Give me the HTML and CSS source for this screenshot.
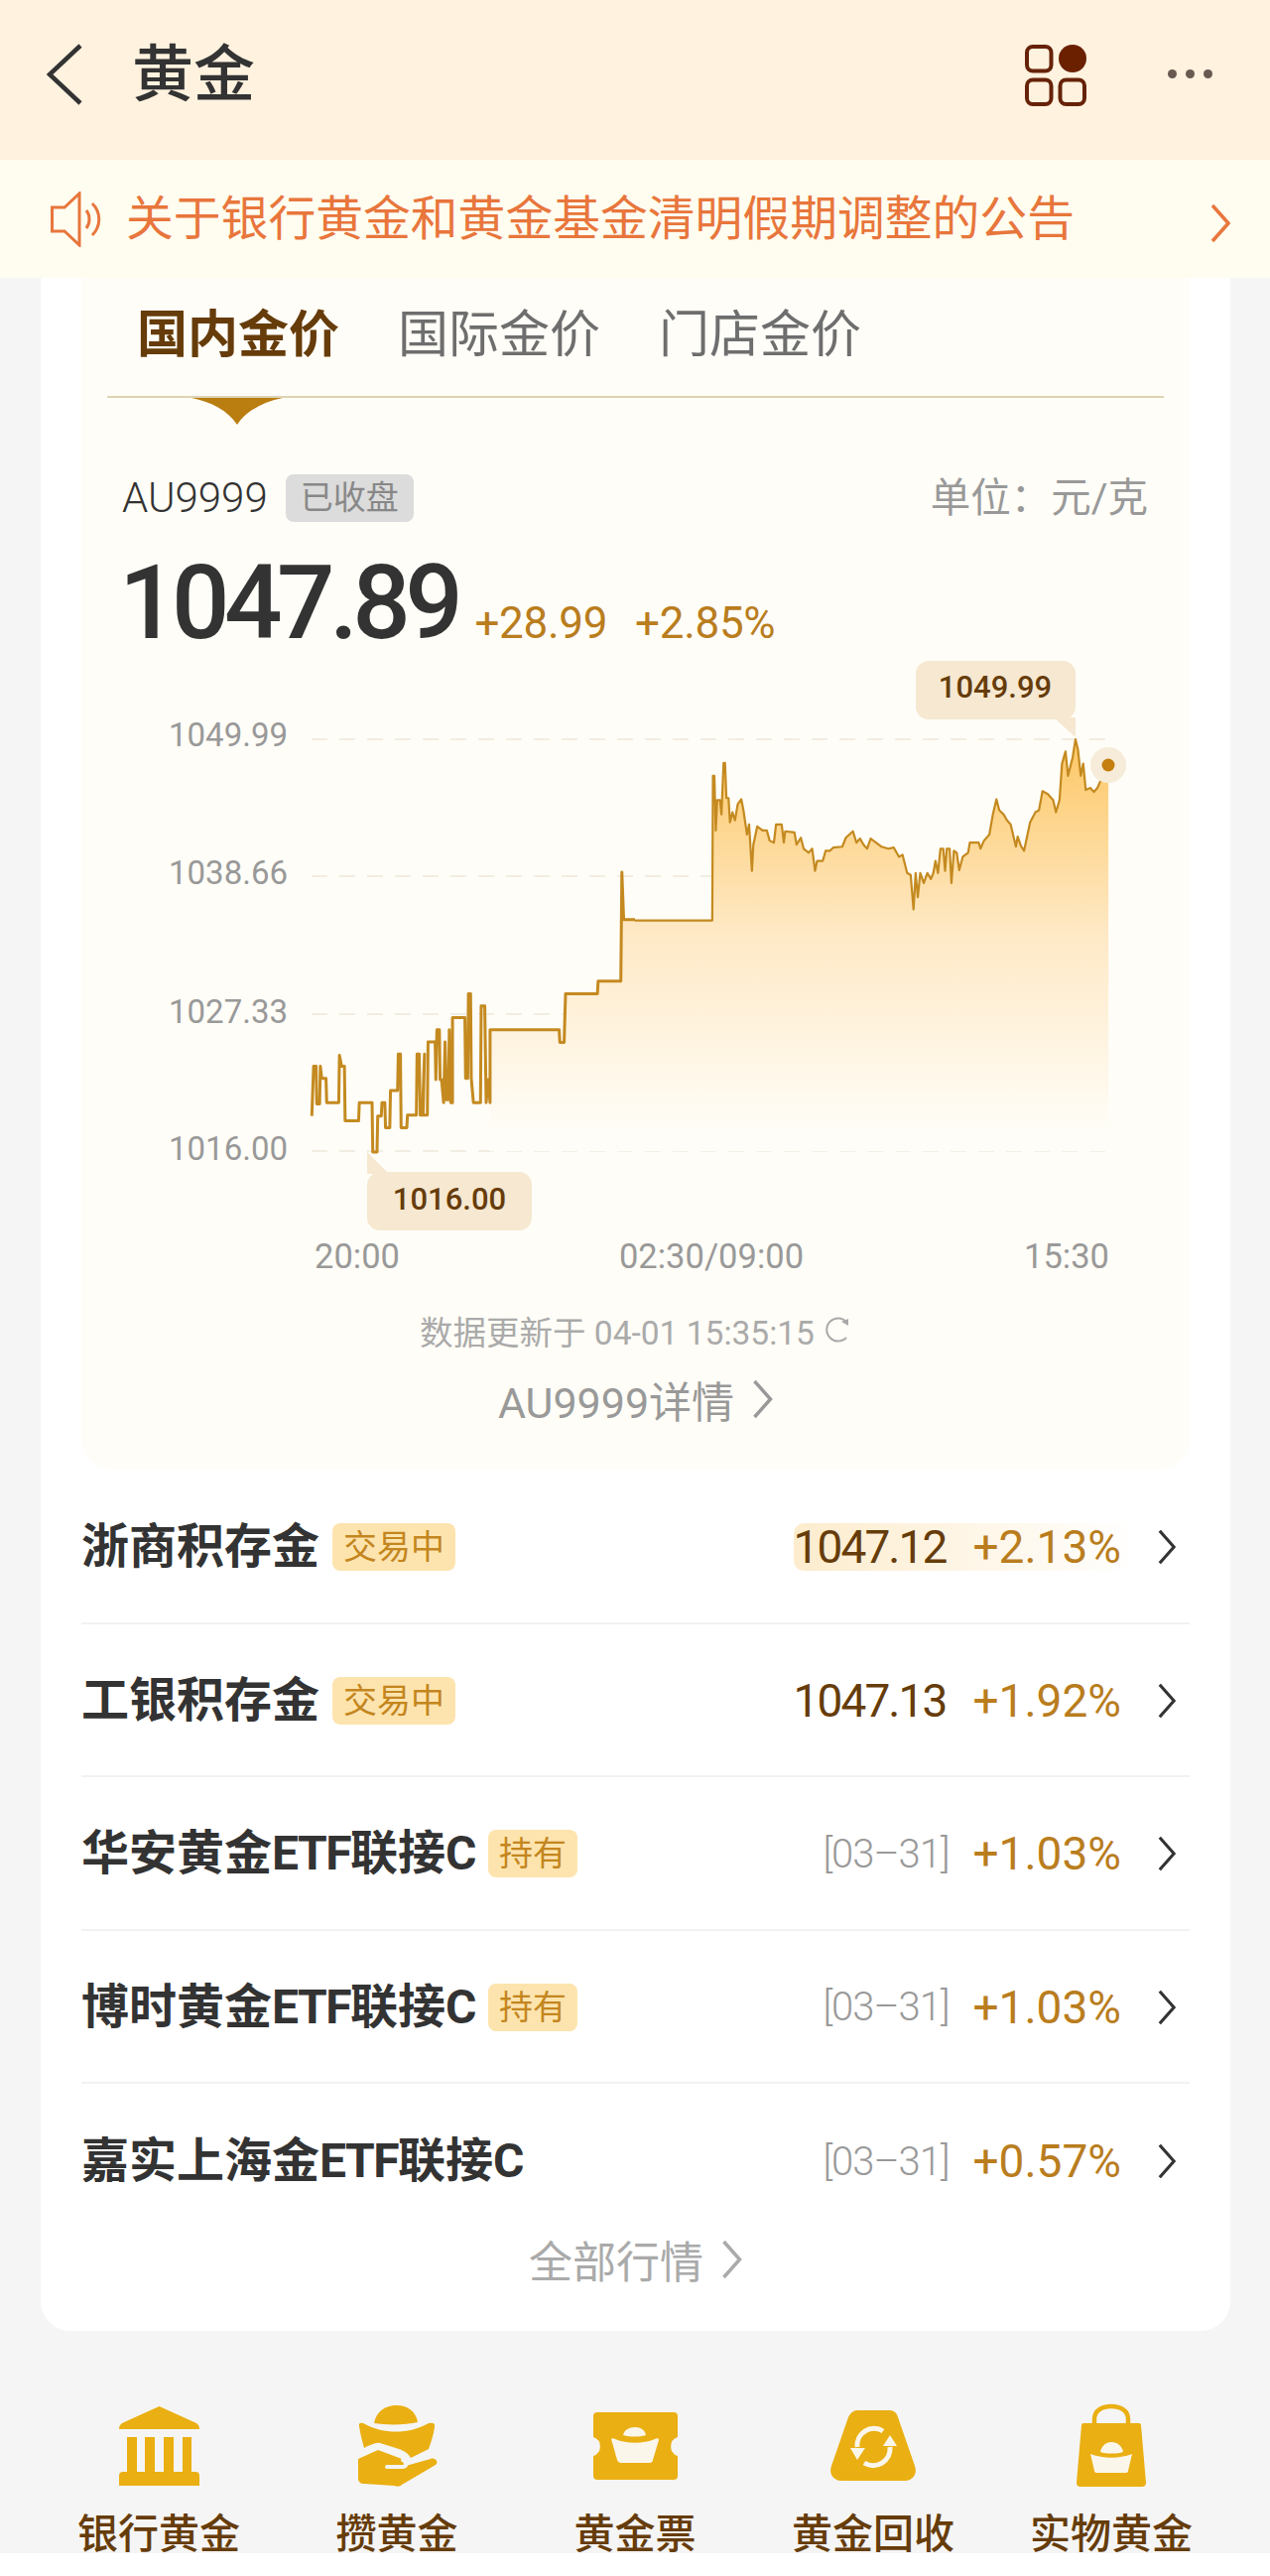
FILE: index.html
```html
<!DOCTYPE html>
<html lang="zh-CN">
<head>
    <meta charset="UTF-8">
    <meta name="viewport" content="width=device-width, initial-scale=1.0">
    <title>黄金</title>
    <link rel="stylesheet" href="styles.css">
</head>

<body>
    <svg class="sprite" width="0" height="0">
        <symbol id="chev" viewBox="0 0 20 40">
            <polyline points="2,2 18,20 2,38" fill="none" stroke="currentColor" stroke-width="3.5"/>
        </symbol>
    </svg>

    <div class="app">
        <!-- Top bar -->
        <header class="topbar">
            <svg class="back" viewBox="0 0 36 62"><polyline points="34,2 3,31 34,60" fill="none" stroke="#333" stroke-width="4.5"/></svg>
            <h1 class="title">黄金</h1>
            <svg class="grid-icon" viewBox="0 0 62 62">
                <rect x="2" y="2" width="24.500" height="24.500" rx="6" fill="none" stroke="#662208" stroke-width="4"/>
                <circle cx="48" cy="14" r="14" fill="#6b2000"/>
                <rect x="2" y="35.500" width="24.500" height="24.500" rx="6" fill="none" stroke="#662208" stroke-width="4"/>
                <rect x="35.500" y="35.500" width="24.500" height="24.500" rx="6" fill="none" stroke="#662208" stroke-width="4"/>
            </svg>
            <div class="more"><i></i><i></i><i></i></div>
        </header>

        <!-- Notice -->
        <div class="notice">
            <svg class="speaker" viewBox="0 0 54 56">
                <path d="M1.500 16 H14 L29 2 V54 L14 40 H1.500 Z" fill="none" stroke="#e8763c" stroke-width="3"/>
                <path d="M36 19 C40 24 40 32 36 37 M42 12 C51 21 51 35 42 44" fill="none" stroke="#e8763c" stroke-width="3"/>
            </svg>
            <span class="notice-text">关于银行黄金和黄金基金清明假期调整的公告</span>
            <svg class="notice-chev"><use href="#chev"/></svg>
        </div>

        <main class="card">
            <section class="panel">
                <nav class="tabs">
                    <span class="tab active">国内金价</span>
                    <span class="tab">国际金价</span>
                    <span class="tab">门店金价</span>
                    <svg class="tab-arrow" viewBox="0 0 92 27"><path d="M0 0 H92 C72 4 55 13 46 27 C37 13 20 4 0 0 Z" fill="#b97d10"/></svg>
                </nav>

                <div class="quote-head">
                    <div class="quote-name">
                        <span class="symbol">AU9999</span>
                        <span class="closed">已收盘</span>
                    </div>
                    <span class="unit">单位：元/克</span>
                </div>

                <div class="price-line">
                    <span class="price">1047.89</span>
                    <span class="change">+28.99</span>
                    <span class="change">+2.85%</span>
                </div>

                <!-- Chart, drawn in page coordinates -->
                <svg class="chart" viewBox="82 660 1116 630">
                    <defs>
                        <linearGradient id="area" gradientUnits="userSpaceOnUse" x1="0" y1="254" x2="0" y2="1220">
                            <stop offset="0" stop-color="#fdc765"/>
                            <stop offset="0.5" stop-color="#fee9c6"/>
                            <stop offset="1" stop-color="#fffdf7"/>
                        </linearGradient>
                    </defs>

                    <line class="grid" x1="314" y1="744" x2="1117" y2="744"/>
                    <line class="grid" x1="314" y1="882" x2="1117" y2="882"/>
                    <line class="grid" x1="314" y1="1021" x2="1117" y2="1021"/>
                    <line class="grid" x1="314" y1="1159" x2="1117" y2="1159"/>

                    <text class="axis" x="290" y="751" text-anchor="end">1049.99</text>
                    <text class="axis" x="290" y="890" text-anchor="end">1038.66</text>
                    <text class="axis" x="290" y="1030" text-anchor="end">1027.33</text>
                    <text class="axis" x="290" y="1168" text-anchor="end">1016.00</text>

                    <!-- night session -->
                    <g transform="translate(100 640) scale(.35714 .40816)">
                        <path class="area" d="M1103 972 H1298 L1300 1003 H1312 L1316 883 H1406 L1408 852 H1472 L1475 583 L1480 700 H1512 V1272 H1103 Z"/>
                        <path class="line" d="M600 1185 L605 1062 H612 L614 1155 H622 L624 1062 L628 1092 H640 L642 1152 H676 L678 1035 L684 1062 H692 L694 1197 H732 L734 1152 H770 L772 1274 H784 L786 1185 H796 L798 1152 H806 L808 1214 H820 L822 1122 H842 L844 1032 H850 L852 1214 H868 L870 1183 H895 L897 1032 H903 L906 1183 H912 L918 1032 L914 1183 H926 L928 1002 H948 L950 1095 L953 972 H960 L962 1095 H966 L972 1152 L976 1002 L980 1145 H985 L988 972 L992 1152 H997 V942 H1032 L1034 1092 H1040 L1042 883 H1048 L1050 1092 L1056 1152 H1076 L1078 913 H1088 L1092 1152 L1098 1095 L1103 1152 V972 H1298 L1300 1003 H1312 L1316 883 H1406 L1408 852 H1472 L1475 583 L1480 700 H1512"/>
                    </g>
                    <!-- day session -->
                    <g transform="translate(640 640) scale(.35714 .40816)">
                        <path class="area" d="M0 702 H218 L220 345 H224 L228 480 L232 405 H240 L244 440 L250 313 H254 L258 400 H264 L268 460 L275 435 L282 455 L290 415 L300 403 L306 430 L316 490 L322 465 L330 580 L334 515 L345 470 L360 480 H372 L380 505 L392 510 L398 465 H414 L420 510 L424 482 L450 485 L456 515 L468 498 L476 525 L490 535 L500 525 L508 580 L514 555 H530 L538 530 H550 L560 522 L585 520 L595 498 L615 482 L625 510 L635 500 L645 515 L655 525 L665 500 L680 510 L695 520 L715 525 L730 522 L745 545 L755 540 L768 585 L778 590 L786 675 L792 585 L798 645 L805 585 L815 610 L825 585 L835 600 L842 585 L848 555 L855 585 L862 525 H870 L875 580 L880 525 H888 L893 610 L900 530 L908 535 L915 578 L925 545 L940 535 L945 510 H970 L975 525 L985 505 L1000 490 L1010 440 L1020 403 L1028 430 L1040 440 L1050 455 L1060 465 L1075 520 L1080 495 L1090 520 L1098 530 L1115 460 L1130 435 L1140 430 L1150 383 L1165 390 L1180 405 L1188 435 L1198 405 L1205 315 L1215 285 L1222 345 L1235 300 L1243 255 L1250 280 L1258 345 L1265 315 L1272 380 L1285 375 L1295 385 L1305 375 L1315 355 L1325 335 L1336 318 V1272 H0 Z"/>
                        <path class="line thin" d="M0 702 H218 L220 345 H224 L228 480 L232 405 H240 L244 440 L250 313 H254 L258 400 H264 L268 460 L275 435 L282 455 L290 415 L300 403 L306 430 L316 490 L322 465 L330 580 L334 515 L345 470 L360 480 H372 L380 505 L392 510 L398 465 H414 L420 510 L424 482 L450 485 L456 515 L468 498 L476 525 L490 535 L500 525 L508 580 L514 555 H530 L538 530 H550 L560 522 L585 520 L595 498 L615 482 L625 510 L635 500 L645 515 L655 525 L665 500 L680 510 L695 520 L715 525 L730 522 L745 545 L755 540 L768 585 L778 590 L786 675 L792 585 L798 645 L805 585 L815 610 L825 585 L835 600 L842 585 L848 555 L855 585 L862 525 H870 L875 580 L880 525 H888 L893 610 L900 530 L908 535 L915 578 L925 545 L940 535 L945 510 H970 L975 525 L985 505 L1000 490 L1010 440 L1020 403 L1028 430 L1040 440 L1050 455 L1060 465 L1075 520 L1080 495 L1090 520 L1098 530 L1115 460 L1130 435 L1140 430 L1150 383 L1165 390 L1180 405 L1188 435 L1198 405 L1205 315 L1215 285 L1222 345 L1235 300 L1243 255 L1250 280 L1258 345 L1265 315 L1272 380 L1285 375 L1295 385 L1305 375 L1315 355 L1325 335 L1336 318"/>
                    </g>

                    <!-- last point -->
                    <circle cx="1117" cy="770" r="18" fill="#f6ecd9"/>
                    <circle cx="1117" cy="770" r="6.500" fill="#c47f0f"/>

                    <!-- high / low tips -->
                    <path d="M1084 742 L1062 722 H1084 Z" fill="#f6e8d1"/>
                    <rect x="923" y="665" width="161" height="59" rx="13" fill="#f6e8d1"/>
                    <text class="tip" x="1003" y="702" text-anchor="middle">1049.99</text>

                    <path d="M370 1160 L392 1182 H370 Z" fill="#f6e8d1"/>
                    <rect x="370" y="1180" width="166" height="59" rx="13" fill="#f6e8d1"/>
                    <text class="tip" x="453" y="1218" text-anchor="middle">1016.00</text>

                    <text class="axis axis-x" x="360" y="1277" text-anchor="middle">20:00</text>
                    <text class="axis axis-x" x="717" y="1277" text-anchor="middle">02:30/09:00</text>
                    <text class="axis axis-x" x="1118" y="1277" text-anchor="end">15:30</text>
                </svg>

                <div class="updated">
                    <span>数据更新于 04-01 15:35:15</span>
                    <svg class="refresh" viewBox="0 0 26 26"><path d="M21 5 A11.500 11.500 0 1 0 21 21" fill="none" stroke="#aaa" stroke-width="2"/><path d="M16 5 L23 2 V9 Z" fill="#aaa"/></svg>
                </div>

                <a class="more-link detail-link">AU9999详情<svg class="link-chev"><use href="#chev"/></svg></a>
            </section>

            <!-- Products -->
            <div class="rows">
                <div class="row">
                    <span class="row-name">浙商积存金</span>
                    <span class="tag">交易中</span>
                    <div class="row-right hot">
                        <span class="val">1047.12</span>
                        <span class="pct">+2.13%</span>
                    </div>
                    <svg class="row-chev"><use href="#chev"/></svg>
                </div>
                <div class="row">
                    <span class="row-name">工银积存金</span>
                    <span class="tag">交易中</span>
                    <div class="row-right">
                        <span class="val">1047.13</span>
                        <span class="pct">+1.92%</span>
                    </div>
                    <svg class="row-chev"><use href="#chev"/></svg>
                </div>
                <div class="row">
                    <span class="row-name">华安黄金<span class="latin">ETF</span>联接<span class="latin">C</span></span>
                    <span class="tag">持有</span>
                    <div class="row-right">
                        <span class="date">[03–31]</span>
                        <span class="pct">+1.03%</span>
                    </div>
                    <svg class="row-chev"><use href="#chev"/></svg>
                </div>
                <div class="row">
                    <span class="row-name">博时黄金<span class="latin">ETF</span>联接<span class="latin">C</span></span>
                    <span class="tag">持有</span>
                    <div class="row-right">
                        <span class="date">[03–31]</span>
                        <span class="pct">+1.03%</span>
                    </div>
                    <svg class="row-chev"><use href="#chev"/></svg>
                </div>
                <div class="row">
                    <span class="row-name">嘉实上海金<span class="latin">ETF</span>联接<span class="latin">C</span></span>
                    <div class="row-right">
                        <span class="date">[03–31]</span>
                        <span class="pct">+0.57%</span>
                    </div>
                    <svg class="row-chev"><use href="#chev"/></svg>
                </div>
            </div>

            <a class="more-link all-link">全部行情<svg class="link-chev"><use href="#chev"/></svg></a>
        </main>

        <!-- Quick links -->
        <nav class="quick">
            <div class="quick-item">
                <div class="quick-icon">
                    <svg width="81" height="80" viewBox="0 0 81 80">
                        <path class="gold" d="M40.500 0 L78 17 Q81 19 81 23 H0 Q0 19 3 17 Z"/>
                        <path class="gold" d="M8 31 H18 V67 H8 Z M26 31 H36 V67 H26 Z M45 31 H55 V67 H45 Z M64 31 H73 V67 H64 Z"/>
                        <path class="gold" d="M4 66 H77 Q81 66 81 70 V80 H0 V70 Q0 66 4 66 Z"/>
                    </svg>
                </div>
                <span class="quick-label">银行黄金</span>
            </div>
            <div class="quick-item">
                <div class="quick-icon">
                    <svg width="83" height="82" viewBox="0 0 83 82">
                        <path class="gold" d="M18 18 C20 6 30 0 40 0 C52 0 60 6 62 17 C50 20 30 20 18 18 Z"/>
                        <path class="gold" d="M3 21 C2 17 6 17 9 19 C27 29 53 29 71 19 C75 17 80 17 79 22 C78 30 75 38 73 44 L55 53 C52 47 46 45 40 43 L24 38 C20 37 12 41 8 43 C6 36 4 28 3 21 Z"/>
                        <path class="gold" d="M2 54 L22 45 L46 54 C50 57 51 60 50 61 L75 54 C79 52 84 57 80 60 L46 80 C44 82 42 82 38 81 L8 79 C4 79 2 77 2 73 Z"/>
                        <path d="M31 62 H46 C51 62 52 58 47 55" fill="none" stroke="#f5f5f5" stroke-width="4" stroke-linecap="round"/>
                    </svg>
                </div>
                <span class="quick-label">攒黄金</span>
            </div>
            <div class="quick-item">
                <div class="quick-icon">
                    <svg width="85" height="68" viewBox="0 0 85 68">
                        <path class="gold" d="M4 0 H81 Q85 0 85 4 V25 A10 10 0 0 0 85 44 V64 Q85 68 81 68 H4 Q0 68 0 64 V44 A10 10 0 0 0 0 25 V4 Q0 0 4 0 Z"/>
                        <path class="cream" d="M30 23 C31 18 36 15 42 15 C48 15 52 18 53 23 C46 25 37 25 30 23 Z"/>
                        <path class="cream" d="M18 27 C19 26 20 26 22 27 C34 32 50 32 62 27 C64 26 66 26 66 28 L60 48 C60 50 58 51 57 51 H28 C26 51 25 50 24 48 Z"/>
                    </svg>
                </div>
                <span class="quick-label">黄金票</span>
            </div>
            <div class="quick-item">
                <div class="quick-icon">
                    <svg width="86" height="71" viewBox="0 0 86 71">
                        <path class="gold" d="M27 0 H60 C64 0 67 3 68 7 L85 56 C88 64 83 71 75 71 H11 C3 71 -2 64 1 56 L18 7 C20 3 23 0 27 0 Z"/>
                        <path d="M53 21 A17 17 0 0 0 27 37 M34 53 A17 17 0 0 0 60 37" fill="none" stroke="#fbf6ea" stroke-width="5"/>
                        <path class="cream" d="M20 38 H35 L27 50 Z M53 36 H67 L60 25 Z"/>
                    </svg>
                </div>
                <span class="quick-label">黄金回收</span>
            </div>
            <div class="quick-item">
                <div class="quick-icon">
                    <svg width="70" height="83" viewBox="0 0 70 83">
                        <path d="M18 20 V15 C18 6 26 2 35 2 C44 2 52 6 52 15 V20" fill="none" stroke="#eaaf12" stroke-width="4.500"/>
                        <path class="gold" d="M7 19 H63 Q65 19 65 21 L70 79 Q70 83 66 83 H4 Q0 83 0 79 L5 21 Q5 19 7 19 Z"/>
                        <path class="cream" d="M24 48 C25 42 30 38 35 38 C41 38 46 42 47 48 C41 50 30 50 24 48 Z"/>
                        <path class="cream" d="M14 50 C28 55 42 55 56 50 L52 67 C52 68 51 69 50 69 H20 C19 69 18 68 18 67 Z"/>
                    </svg>
                </div>
                <span class="quick-label">实物黄金</span>
            </div>
        </nav>
    </div>
</body>
</html>
```

FILE: styles.css
```css
* {
    box-sizing: border-box;
}

body {
    margin: 0;
    background-color: #fff;
    color: #333;
    font-family: Roboto, "Noto Sans CJK SC", sans-serif;
}

.sprite {
    position: absolute;
}

.app {
    width: 1280px;
    height: 2573px;
    overflow: hidden;
    background-color: #f5f5f5;
}

/* Top bar */
.topbar {
    display: flex;
    align-items: center;
    height: 161px;
    padding: 0 58px 12px 47px;
    background-color: #fff2df;
}

.back {
    width: 36px;
    height: 62px;
}

.title {
    margin: 2px 0 0 50px;
    font-size: 62px;
    font-weight: 500;
    line-height: 1;
}

.grid-icon {
    width: 62px;
    height: 62px;
    margin-left: auto;
    transform: translate(1px, 1px);
}

.more {
    display: flex;
    gap: 9px;
    margin-left: 83px;
}

.more i {
    width: 9px;
    height: 9px;
    border-radius: 50%;
    background-color: #6a5950;
}

/* Notice */
.notice {
    display: flex;
    align-items: center;
    height: 119px;
    padding: 0 40px 0 51px;
    background-color: #fffdf0;
    color: #e8763c;
}

.speaker {
    width: 54px;
    height: 56px;
}

.notice-text {
    margin: 2px 0 0 22px;
    font-size: 47.800px;
    line-height: 1;
}

.notice-chev {
    width: 20px;
    height: 40px;
    margin: 8px 0 0 auto;
}

/* Card */
.card {
    margin: 0 40px 0 41px;
    padding-bottom: 1px;
    border-radius: 0 0 30px 30px;
    background-color: #fff;
}

.panel {
    height: 1201px;
    margin: 0 41px;
    border-radius: 0 0 30px 30px;
    background-color: #fffdf7;
}

.tabs {
    position: relative;
    display: flex;
    gap: 59px;
    height: 121px;
    margin: 0 26px;
    padding: 28px 0 0 30px;
    border-bottom: 2px solid #ddd4b4;
}

.tab {
    font-size: 51px;
    line-height: 60px;
    color: #6e6e6e;
}

.tab.active {
    color: #663c0a;
    font-weight: 700;
}

.tab-arrow {
    position: absolute;
    top: 121px;
    left: 85px;
    width: 92px;
    height: 27px;
}

.quote-head {
    display: flex;
    justify-content: space-between;
    align-items: center;
    margin-top: 76px;
    padding: 0 42px 0 41px;
}

.quote-name {
    display: flex;
    align-items: center;
    gap: 18px;
}

.symbol {
    font-size: 42px;
    font-weight: 300;
}

.closed {
    padding: 0 15px;
    border-radius: 8px;
    background-color: #dcdcdc;
    color: #888;
    font-size: 33px;
    line-height: 48px;
}

.unit {
    color: #999;
    font-size: 40.500px;
    line-height: 48px;
}

.price-line {
    display: flex;
    align-items: baseline;
    gap: 28px;
    height: 107px;
    margin-top: 28px;
    padding-left: 38px;
}

.price {
    margin-right: -11px;
    font-size: 103px;
    font-weight: 500;
    line-height: 107px;
    letter-spacing: -5.500px;
}

.change {
    color: #b97d1e;
    font-size: 44px;
    letter-spacing: -0.3px;
}

/* Chart */
.chart {
    display: block;
    width: 1116px;
    height: 630px;
}

.grid {
    stroke: #f2ede2;
    stroke-width: 2;
    stroke-dasharray: 16 12;
}

.axis {
    fill: #999;
    font-size: 33px;
}

.axis-x {
    font-size: 34.500px;
}

.tip {
    fill: #663c0a;
    font-size: 31px;
    font-weight: 500;
}

.area {
    fill: url(#area);
}

.line {
    fill: none;
    stroke: #c48a20;
    stroke-width: 3;
    stroke-linejoin: round;
    vector-effect: non-scaling-stroke;
}

.line.thin {
    stroke-width: 2.200;
}

.updated {
    display: flex;
    justify-content: center;
    align-items: center;
    gap: 11px;
    height: 40px;
    margin-top: 29px;
    color: #aaa;
    font-size: 33.500px;
}

.refresh {
    width: 26px;
    height: 26px;
}

.more-link {
    display: flex;
    justify-content: center;
    align-items: center;
    color: #999;
}

.detail-link {
    height: 50px;
    margin-top: 25px;
    font-size: 43px;
}

.link-chev {
    width: 21px;
    height: 40px;
    margin-left: 18px;
}

/* Product rows */
.rows {
    margin: 1px 41px 0;
}

.row {
    display: flex;
    align-items: center;
    gap: 13px;
    height: 154.500px;
    padding-top: 2px;
    border-bottom: 2px solid #f2f2f2;
}

.row:last-child {
    border-bottom: none;
}

.row-name {
    font-size: 48px;
    font-weight: 700;
    line-height: 1;
}

.latin {
    letter-spacing: -1.500px;
}

.tag {
    padding: 0 11px;
    border-radius: 8px;
    background-color: #fde4ae;
    color: #c4861e;
    font-size: 34px;
    line-height: 48px;
}

.row-right {
    display: flex;
    align-items: center;
    gap: 27px;
    height: 48px;
    margin-left: auto;
}

.row-right.hot {
    margin-right: -30px;
    padding-right: 30px;
    border-radius: 10px 0 0 10px;
    background: linear-gradient(90deg, #fdeccd, #fff 96%);
}

.val {
    color: #663c0a;
    font-size: 46px;
    letter-spacing: -1.900px;
}

.pct {
    color: #b97d1e;
    font-size: 46px;
}

.date {
    margin-right: -3px;
    color: #999;
    font-size: 40px;
    font-weight: 300;
    letter-spacing: -1px;
}

.row-chev {
    width: 18px;
    height: 36px;
    margin: 0 14px 0 24px;
    color: #333;
}

.all-link {
    height: 50px;
    margin-top: -3px;
    margin-bottom: 46px;
    color: #aaa;
    font-size: 44px;
}

/* Quick links */
.quick {
    display: grid;
    grid-template-columns: repeat(5, 240px);
    padding: 74px 40px 0;
}

.quick-item {
    display: flex;
    flex-direction: column;
    align-items: center;
}

.quick-icon {
    display: flex;
    align-items: center;
    height: 84px;
}

.quick-icon svg {
    display: block;
    overflow: visible;
}

.gold {
    fill: #eaaf12;
}

.cream {
    fill: #fbf6ea;
}

.quick-label {
    margin-top: 27px;
    color: #663c0a;
    font-size: 41px;
    font-weight: 500;
    line-height: 40px;
    white-space: nowrap;
}
```
